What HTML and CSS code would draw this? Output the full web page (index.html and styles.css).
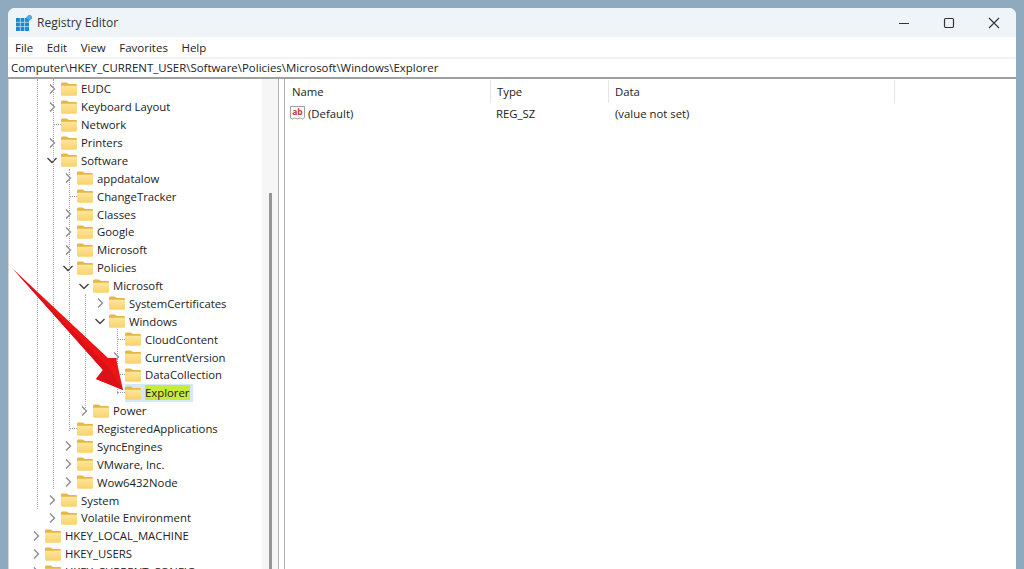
FILE: index.html
```html
<!DOCTYPE html>
<html>
<head>
    <meta name="viewport" content="width=device-width, initial-scale=1.0">
    <title>Registry Editor</title>
    <link rel="stylesheet" href="styles.css">
</head>
<body>
    <svg class="defs" width="0" height="0">
        <defs>
            <linearGradient id="folderFront" x1="0" y1="0" x2="0" y2="1">
                <stop offset="0" stop-color="#fde69a"/>
                <stop offset="1" stop-color="#f8d26c"/>
            </linearGradient>
        </defs>
        <symbol id="folder" viewBox="0 0 16 14">
            <path d="M0 2C0 1 .6.500 1.500.500h3.900c.7 0 1 .2 1.500.7l.9.900h6.900c.7 0 1.300.5 1.300 1.200V5H0z" fill="#e6b648"/>
            <path d="M0 3.800h16v8.800c0 .7-.5 1.200-1.200 1.200H1.200C.5 13.800 0 13.300 0 12.600z" fill="url(#folderFront)"/>
        </symbol>
        <symbol id="closed" viewBox="0 0 12 12">
            <path d="M4 1.500 8.500 6 4 10.500" fill="none" stroke="#8a8a8a" stroke-width="1.300"/>
        </symbol>
        <symbol id="open" viewBox="0 0 12 12">
            <path d="M1.500 4 6 8.500 10.500 4" fill="none" stroke="#444" stroke-width="1.400"/>
        </symbol>
    </svg>

    <div class="window">
        <div class="titlebar">
            <svg class="app-icon" width="16" height="16" viewBox="0 0 16 16">
                <rect x="0" y="3" width="13" height="13" fill="#2385cb"/>
                <path d="M4.300 3v13M8.600 3v13M0 7.300h13M0 11.600h13" stroke="#bfe3f7" stroke-width=".8"/>
                <rect x="11" y="0" width="5" height="5" transform="rotate(45 13.500 2.500)" fill="#5aa9dc"/>
            </svg>
            <span class="title">Registry Editor</span>
            <div class="win-buttons">
                <svg width="12" height="12" viewBox="0 0 12 12"><path d="M1 6.500h10" stroke="#333" stroke-width="1.200"/></svg>
                <svg width="12" height="12" viewBox="0 0 12 12"><rect x="1.500" y="1.500" width="9" height="9" rx="1.200" fill="none" stroke="#333" stroke-width="1.200"/></svg>
                <svg width="12" height="12" viewBox="0 0 12 12"><path d="M1 1l10 10M11 1 1 11" stroke="#333" stroke-width="1.100"/></svg>
            </div>
        </div>

        <div class="menubar">
            <span>File</span><span>Edit</span><span>View</span><span>Favorites</span><span>Help</span>
        </div>

        <div class="address">Computer\HKEY_CURRENT_USER\Software\Policies\Microsoft\Windows\Explorer</div>

        <div class="panes">
            <div class="tree-pane">
                <ul class="tree">
                    <li class="lvl-1"><svg class="chev"><use href="#closed"/></svg><svg class="folder"><use href="#folder"/></svg><span>EUDC</span></li>
                    <li class="lvl-1"><svg class="chev"><use href="#closed"/></svg><svg class="folder"><use href="#folder"/></svg><span>Keyboard Layout</span></li>
                    <li class="lvl-1"><i class="dash"></i><svg class="folder"><use href="#folder"/></svg><span>Network</span></li>
                    <li class="lvl-1"><svg class="chev"><use href="#closed"/></svg><svg class="folder"><use href="#folder"/></svg><span>Printers</span></li>
                    <li class="lvl-1"><svg class="chev"><use href="#open"/></svg><svg class="folder"><use href="#folder"/></svg><span>Software</span></li>
                    <li class="lvl-2"><svg class="chev"><use href="#closed"/></svg><svg class="folder"><use href="#folder"/></svg><span>appdatalow</span></li>
                    <li class="lvl-2"><i class="dash"></i><svg class="folder"><use href="#folder"/></svg><span>ChangeTracker</span></li>
                    <li class="lvl-2"><svg class="chev"><use href="#closed"/></svg><svg class="folder"><use href="#folder"/></svg><span>Classes</span></li>
                    <li class="lvl-2"><svg class="chev"><use href="#closed"/></svg><svg class="folder"><use href="#folder"/></svg><span>Google</span></li>
                    <li class="lvl-2"><svg class="chev"><use href="#closed"/></svg><svg class="folder"><use href="#folder"/></svg><span>Microsoft</span></li>
                    <li class="lvl-2"><svg class="chev"><use href="#open"/></svg><svg class="folder"><use href="#folder"/></svg><span>Policies</span></li>
                    <li class="lvl-3"><svg class="chev"><use href="#open"/></svg><svg class="folder"><use href="#folder"/></svg><span>Microsoft</span></li>
                    <li class="lvl-4"><svg class="chev"><use href="#closed"/></svg><svg class="folder"><use href="#folder"/></svg><span>SystemCertificates</span></li>
                    <li class="lvl-4"><svg class="chev"><use href="#open"/></svg><svg class="folder"><use href="#folder"/></svg><span>Windows</span></li>
                    <li class="lvl-5"><i class="dash"></i><svg class="folder"><use href="#folder"/></svg><span>CloudContent</span></li>
                    <li class="lvl-5"><svg class="chev"><use href="#closed"/></svg><svg class="folder"><use href="#folder"/></svg><span>CurrentVersion</span></li>
                    <li class="lvl-5"><i class="dash"></i><svg class="folder"><use href="#folder"/></svg><span>DataCollection</span></li>
                    <li class="lvl-5"><i class="dash"></i><div class="selected"><svg class="folder"><use href="#folder"/></svg><span>Explorer</span></div></li>
                    <li class="lvl-3"><svg class="chev"><use href="#closed"/></svg><svg class="folder"><use href="#folder"/></svg><span>Power</span></li>
                    <li class="lvl-2"><i class="dash"></i><svg class="folder"><use href="#folder"/></svg><span>RegisteredApplications</span></li>
                    <li class="lvl-2"><svg class="chev"><use href="#closed"/></svg><svg class="folder"><use href="#folder"/></svg><span>SyncEngines</span></li>
                    <li class="lvl-2"><svg class="chev"><use href="#closed"/></svg><svg class="folder"><use href="#folder"/></svg><span>VMware, Inc.</span></li>
                    <li class="lvl-2"><svg class="chev"><use href="#closed"/></svg><svg class="folder"><use href="#folder"/></svg><span>Wow6432Node</span></li>
                    <li class="lvl-1"><svg class="chev"><use href="#closed"/></svg><svg class="folder"><use href="#folder"/></svg><span>System</span></li>
                    <li class="lvl-1"><svg class="chev"><use href="#closed"/></svg><svg class="folder"><use href="#folder"/></svg><span>Volatile Environment</span></li>
                    <li class="lvl-0"><svg class="chev"><use href="#closed"/></svg><svg class="folder"><use href="#folder"/></svg><span>HKEY_LOCAL_MACHINE</span></li>
                    <li class="lvl-0"><svg class="chev"><use href="#closed"/></svg><svg class="folder"><use href="#folder"/></svg><span>HKEY_USERS</span></li>
                    <li class="lvl-0"><svg class="chev"><use href="#closed"/></svg><svg class="folder"><use href="#folder"/></svg><span>HKEY_CURRENT_CONFIG</span></li>
                </ul>

                <i class="guide guide-a"></i>
                <i class="guide guide-b"></i>
                <i class="guide guide-c"></i>
                <i class="guide guide-d"></i>
                <i class="guide guide-e"></i>

                <svg class="arrow" width="120" height="135" viewBox="0 0 120 135">
                    <path d="M1 2 96 91 104 91 111 123 84 112 91 103Z" fill="#ee1414"/>
                    <path d="M1 2 91 103 84 112 111 123 96 100Z" fill="#dc1018"/>
                </svg>
            </div>

            <div class="scrollbar"><div class="thumb"></div></div>

            <div class="list-pane">
                <div class="list-head">
                    <span class="col-name">Name</span>
                    <span class="col-type">Type</span>
                    <span class="col-data">Data</span>
                </div>
                <div class="list-row">
                    <span class="col-name">
                        <svg class="ab-icon" width="15" height="16" viewBox="0 0 15 16">
                            <path d="M.5 1.500h14v11l-2 1.500-2.500-1-2.500 1-2.500-1-2.500 1-2-1z" fill="#fff" stroke="#a0a0a0"/>
                            <text x="7.500" y="10" text-anchor="middle" class="ab-text">ab</text>
                        </svg>(Default)
                    </span>
                    <span class="col-type">REG_SZ</span>
                    <span class="col-data">(value not set)</span>
                </div>
            </div>
        </div>
    </div>
</body>
</html>
```

FILE: styles.css
```css
* {
    box-sizing: border-box;
    margin: 0;
    padding: 0;
}

html, body {
    height: 100%;
    overflow: hidden;
}

body {
    font-family: "Open Sans", "Noto Sans", sans-serif;
    font-size: 11.35px;
    color: #222;
    background-color: #8faabf;
    padding: 8px 8px 0 8px;
}

.defs {
    position: absolute;
}

.window {
    background-color: white;
    border-radius: 7px 7px 0 0;
    height: 600px;
    overflow: hidden;
}

.titlebar {
    display: flex;
    align-items: center;
    height: 29px;
    padding-left: 8px;
    background-color: #eff4f9;
}

.app-icon {
    margin-right: 5px;
}

.title {
    font-size: 12px;
    color: #333;
}

.win-buttons {
    display: flex;
    gap: 33px;
    margin-left: auto;
    padding-right: 16px;
}

.menubar {
    display: flex;
    gap: 13.5px;
    align-items: center;
    height: 20px;
    padding-left: 7px;
    font-size: 11.5px;
}

.address {
    height: 20px;
    line-height: 18px;
    padding-left: 3px;
    border-top: 2px solid #f2f2f2;
    font-size: 11.45px;
    white-space: nowrap;
}

.panes {
    display: flex;
    border-top: 2px solid #a0a0a0;
    height: 520px;
}

.tree-pane {
    position: relative;
    width: 254px;
    padding-top: 1px;
    border-left: 1px solid #d8d8d8;
}

.tree {
    list-style: none;
}

.tree li {
    display: flex;
    align-items: center;
    height: 17.88px;
    white-space: nowrap;
}

.chev {
    width: 12px;
    height: 12px;
    flex-shrink: 0;
    margin-right: 3px;
}

.dash {
    flex-shrink: 0;
    width: 8px;
    height: 1px;
    margin-left: 7px;
    border-bottom: 1px dotted #999;
}

.folder {
    width: 16px;
    height: 14px;
    flex-shrink: 0;
    margin-right: 4px;
}

.lvl-0 { padding-left: 21px; }
.lvl-1 { padding-left: 37px; }
.lvl-2 { padding-left: 53px; }
.lvl-3 { padding-left: 69px; }
.lvl-4 { padding-left: 85px; }
.lvl-5 { padding-left: 101px; }

.selected {
    display: flex;
    align-items: center;
    height: 18px;
    padding-right: 3px;
    background-color: #d4e9f7;
}

.selected span {
    background-color: #c8ea3a;
}

.guide {
    position: absolute;
    border-left: 1px dotted #a8a8a8;
}

.guide-a { left: 28px; top: 0; height: 430px; }
.guide-b { left: 44px; top: 0; height: 410px; }
.guide-c { left: 60px; top: 90px; height: 262px; }
.guide-d { left: 76px; top: 215px; height: 118px; }
.guide-e { left: 108px; top: 250px; height: 65px; }

.arrow {
    position: absolute;
    left: 3px;
    top: 188px;
}

.scrollbar {
    display: flex;
    justify-content: center;
    width: 17px;
    padding-top: 114px;
    background-color: #f6f6f6;
    border-right: 1px solid #b4b4b4;
}

.thumb {
    width: 3px;
    height: 400px;
    background-color: #969696;
}

.list-pane {
    flex: 1;
    margin-left: 5px;
    border-left: 1px solid #b4b4b4;
}

.list-head, .list-row {
    display: flex;
    align-items: center;
}

.list-head {
    height: 24px;
    padding-top: 1px;
}

.list-row {
    height: 20px;
}

.col-name {
    display: flex;
    align-items: center;
    width: 206px;
    padding-left: 5px;
    height: 100%;
}

.col-type {
    display: flex;
    align-items: center;
    width: 118px;
    padding-left: 5px;
    height: 100%;
}

.col-data {
    display: flex;
    align-items: center;
    width: 286px;
    padding-left: 6px;
    height: 100%;
}

.list-head span {
    border-right: 1px solid #e5e5e5;
}

.list-head .col-name {
    padding-left: 7px;
}

.list-head .col-type {
    padding-left: 6px;
}

.ab-icon {
    margin-right: 3px;
}

.ab-text {
    font-size: 8.5px;
    font-weight: bold;
    fill: #c0392b;
}
```
